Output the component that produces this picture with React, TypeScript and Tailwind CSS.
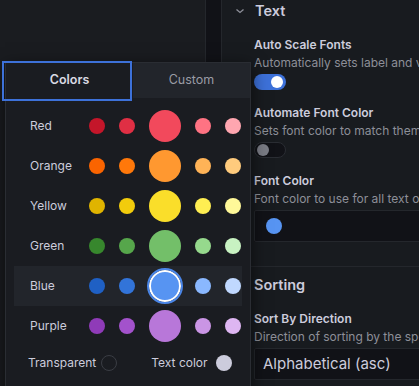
import React from "react";

const rows: { name: string; colors: string[] }[] = [
  { name: "Red", colors: ["#C4162A", "#E02F44", "#F2495C", "#FF7383", "#FFA6B0"] },
  { name: "Orange", colors: ["#FA6400", "#FF780A", "#FF9830", "#FFB357", "#FFCB7D"] },
  { name: "Yellow", colors: ["#E0B400", "#F2CC0C", "#FADE2A", "#FFEE52", "#FFF899"] },
  { name: "Green", colors: ["#37872D", "#56A64B", "#73BF69", "#96D98D", "#C8F2C2"] },
  { name: "Blue", colors: ["#1F60C4", "#3274D9", "#5794F2", "#8AB8FF", "#C0D8FF"] },
  { name: "Purple", colors: ["#8F3BB8", "#A352CC", "#B877D9", "#CA95E5", "#DEB6F2"] },
];

function Swatch({ color, big, selected }: { color: string; big?: boolean; selected?: boolean }) {
  if (selected) {
    return (
      <div
        className="w-[32px] h-[32px] rounded-full border-2 border-white outline-2 outline-[#4a86e8]"
        style={{ backgroundColor: color }}
      />
    );
  }
  return (
    <div
      className={big ? "w-[32px] h-[32px] rounded-full" : "w-[16px] h-[16px] rounded-full"}
      style={{ backgroundColor: color }}
    />
  );
}

export default function App() {
  return (
    <div
      className="relative w-[419px] h-[386px] overflow-hidden bg-[#181b1f] text-[#ccccdc] flex"
      style={{ fontFamily: "Inter, 'Noto Sans', sans-serif" }}
    >
      <div className="w-[206px] shrink-0 bg-[#1a1c20] border-r border-[#24272c]" />
      <div className="w-[16px] shrink-0 bg-[#111217] border-r border-[#24272c]" />
      <div className="flex-1 min-w-0 flex flex-col bg-[#181b1f] overflow-hidden">
        <div className="h-[22px] flex items-center pl-[13px] gap-[10px]">
          <svg width="10" height="10" viewBox="0 0 10 10" className="shrink-0">
            <path d="M1.5 3.5 L5 6.5 L8.5 3.5" stroke="#8e909a" strokeWidth="1.3" fill="none" />
          </svg>
          <span className="text-[14.5px] font-semibold whitespace-nowrap">Text</span>
        </div>
        <div className="pl-[32px] flex flex-col whitespace-nowrap">
          <div className="mt-[14px] text-[12px] font-semibold leading-[18px]">Auto Scale Fonts</div>
          <div className="text-[12px] leading-[17px] text-[#8d8f98]">Automatically sets label and value sizes</div>
          <div className="mt-[3px] w-[32px] h-[16px] rounded-full bg-[#3d71d9] relative">
            <div className="absolute right-[3px] top-[2px] w-[12px] h-[12px] rounded-full bg-white" />
          </div>
          <div className="mt-[14px] text-[12px] font-semibold leading-[18px]">Automate Font Color</div>
          <div className="text-[12px] leading-[17px] text-[#8d8f98]">Sets font color to match theme</div>
          <div className="mt-[3px] w-[32px] h-[16px] rounded-full bg-[#111217] border border-[#2a2d33] relative">
            <div className="absolute left-[2px] top-[1px] w-[12px] h-[12px] rounded-full bg-[#7a7c85]" />
          </div>
          <div className="mt-[14px] text-[12px] font-semibold leading-[18px]">Font Color</div>
          <div className="text-[12px] leading-[17px] text-[#8d8f98]">Font color to use for all text on the panel</div>
          <div className="mt-[3px] h-[32px] w-[200px] bg-[#111217] border border-[#24272c] rounded-[2px] flex items-center pl-[11px]">
            <div className="w-[16px] h-[16px] rounded-full bg-[#5794F2]" />
          </div>
        </div>
        <div className="mt-[24px] border-t border-[#24272c]" />
        <div className="pl-[32px] flex flex-col whitespace-nowrap">
          <div className="mt-[9px] text-[14.5px] font-semibold leading-[18px]">Sorting</div>
          <div className="mt-[16px] text-[12px] font-semibold leading-[18px]">Sort By Direction</div>
          <div className="text-[12px] leading-[17px] text-[#8d8f98]">Direction of sorting by the specified field</div>
          <div className="mt-[3px] h-[32px] w-[200px] bg-[#111217] border border-[#24272c] rounded-[2px] flex items-center pl-[8px] text-[15px]">
            Alphabetical (asc)
          </div>
        </div>
      </div>

      <div className="absolute left-[5px] top-[62px] w-[246px] h-[340px] bg-[#1a1c21] border border-[#2a2d33] shadow-[0_4px_16px_rgba(0,0,0,0.6)]">
        <div className="flex h-[35px]">
          <div className="relative w-[127px] flex items-center justify-center text-[12.5px] font-semibold text-[#d8d9e3]">
            Colors
            <div className="absolute left-[-4px] top-[-2px] w-[130px] h-[40px] border-2 border-[#3d71d9]" />
          </div>
          <div className="flex-1 flex items-center justify-center bg-[#22252b] text-[12.5px] text-[#9a9ca5]">
            Custom
          </div>
        </div>
        <div className="px-[8px] pt-[8px] flex flex-col">
          {rows.map((r) => (
            <div
              key={r.name}
              className={
                "h-[40px] flex items-center pl-[16px] " + (r.name === "Blue" ? "bg-[#22252b]" : "")
              }
            >
              <span className="w-[59px] text-[12px] text-[#ccccdc]">{r.name}</span>
              <div className="flex items-center gap-[14px]">
                {r.colors.map((c, i) => (
                  <Swatch key={c} color={c} big={i === 2} selected={r.name === "Blue" && i === 2} />
                ))}
              </div>
            </div>
          ))}
          <div className="h-[34px] flex items-center pl-[14px] text-[12px]">
            <span>Transparent</span>
            <div className="ml-[5px] w-[16px] h-[16px] rounded-full border border-[#3a3d44]" />
            <span className="ml-[34px]">Text color</span>
            <div className="ml-[8px] w-[16px] h-[16px] rounded-full bg-[#ccccdc]" />
          </div>
        </div>
      </div>
    </div>
  );
}
